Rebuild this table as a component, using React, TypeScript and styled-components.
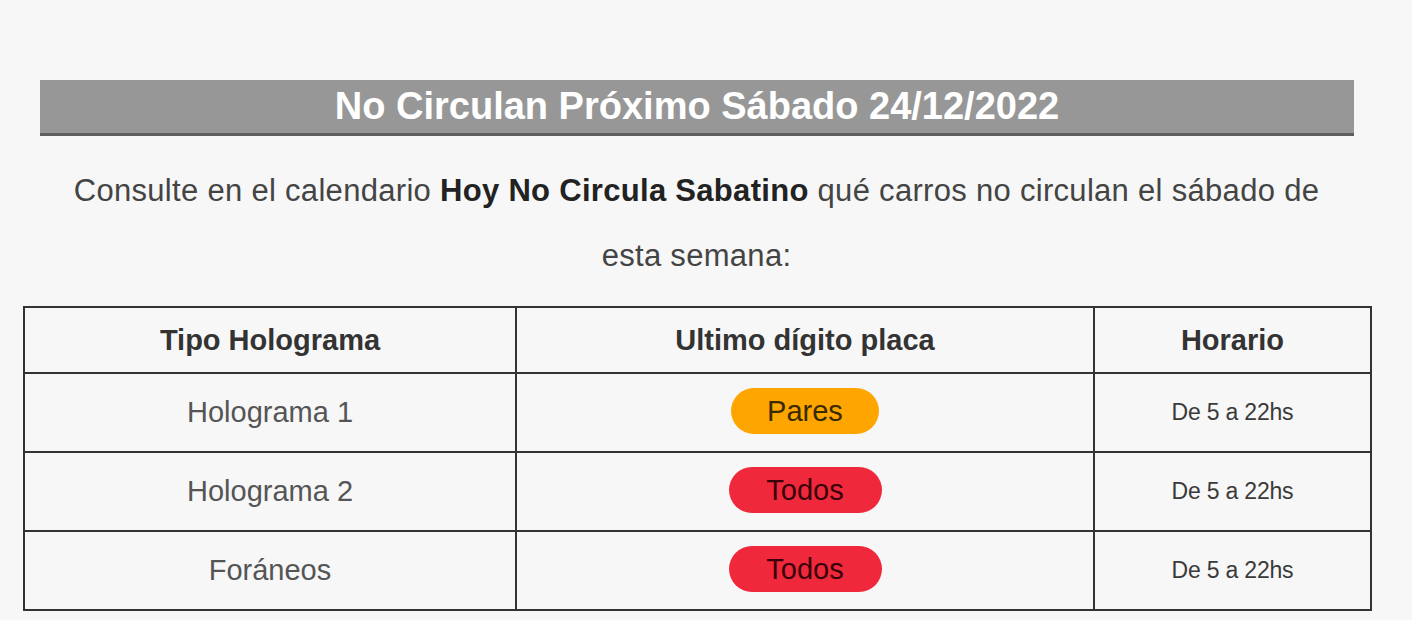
import styled, { createGlobalStyle } from "styled-components";

const GlobalStyle = createGlobalStyle`
  html, body {
    margin: 0;
    padding: 0;
    background: #f7f7f7;
    font-family: "Liberation Sans", Arial, sans-serif;
  }
`;

type Badge = "orange" | "red";

const rows: { tipo: string; digito: string; color: Badge; horario: string }[] = [
  { tipo: "Holograma 1", digito: "Pares", color: "orange", horario: "De 5 a 22hs" },
  { tipo: "Holograma 2", digito: "Todos", color: "red", horario: "De 5 a 22hs" },
  { tipo: "Foráneos", digito: "Todos", color: "red", horario: "De 5 a 22hs" },
];

export default function App() {
  return (
    <>
      <GlobalStyle />
      <Page>
        <TitleBar>No Circulan Próximo Sábado 24/12/2022</TitleBar>
        <Intro>
          Consulte en el calendario <Strong>Hoy No Circula Sabatino</Strong> qué carros no circulan el
          sábado de esta semana:
        </Intro>
        <Table>
          <colgroup>
            <col style={{ width: 492 }} />
            <col style={{ width: 578 }} />
            <col style={{ width: 277 }} />
          </colgroup>
          <thead>
            <tr>
              <Th>Tipo Holograma</Th>
              <Th>Ultimo dígito placa</Th>
              <Th>Horario</Th>
            </tr>
          </thead>
          <tbody>
            {rows.map((r) => (
              <tr key={r.tipo}>
                <Td>{r.tipo}</Td>
                <Td>
                  <Pill $color={r.color}>{r.digito}</Pill>
                </Td>
                <SmallTd>{r.horario}</SmallTd>
              </tr>
            ))}
          </tbody>
        </Table>
      </Page>
    </>
  );
}

const Page = styled.div`
  width: 1347px;
  padding: 80px 0 0 23px;
`;

const TitleBar = styled.h2`
  margin: 0 16px 0 17px;
  height: 53px;
  line-height: 53px;
  background: #979797;
  border-bottom: 3px solid #5e5e5e;
  color: #fff;
  font-size: 38px;
  font-weight: 700;
  text-align: center;
`;

const Intro = styled.p`
  margin: 22px 40px 18px;
  font-size: 31px;
  letter-spacing: 0.3px;
  line-height: 65px;
  color: #444;
  text-align: center;
`;

const Strong = styled.b`
  color: #222;
`;

const Table = styled.table`
  width: 1347px;
  border-collapse: collapse;
  table-layout: fixed;
  border: 2px solid #333;
`;

const Th = styled.th`
  height: 64px;
  padding: 0;
  border: 2px solid #333;
  font-size: 29px;
  font-weight: 700;
  color: #333;
  text-align: center;
  vertical-align: middle;
`;

const Td = styled.td`
  height: 77px;
  padding: 0;
  border: 2px solid #333;
  font-size: 29px;
  color: #555;
  text-align: center;
  vertical-align: middle;
`;

const SmallTd = styled(Td)`
  font-size: 23px;
  color: #3a3a3a;
  letter-spacing: -0.2px;
`;

const Pill = styled.span<{ $color: Badge }>`
  display: inline-block;
  width: ${(p) => (p.$color === "orange" ? "148px" : "153px")};
  height: 46px;
  line-height: 46px;
  margin-top: -4px;
  border-radius: 23px;
  background: ${(p) => (p.$color === "orange" ? "#ffa500" : "#f0283c")};
  color: ${(p) => (p.$color === "orange" ? "#3a2a00" : "#3a0008")};
  font-size: 29px;
  vertical-align: middle;
`;
